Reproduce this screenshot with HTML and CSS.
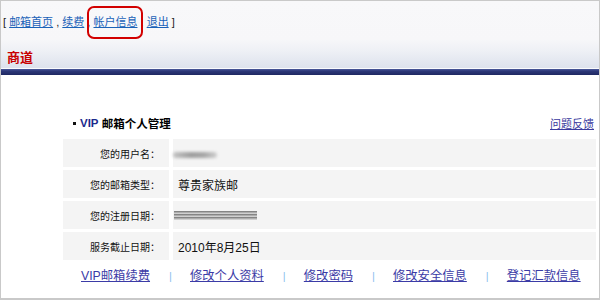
FILE: index.html
```html
<!DOCTYPE html>
<html lang="zh-CN">
<head>
<meta charset="utf-8">
<title>帐户信息</title>
<link rel="stylesheet" href="styles.css">
</head>
<body>
<div class="page">
  <div class="header">
    <div class="topnav">[ <a href="#">邮箱首页</a> , <a href="#">续费</a> , <a href="#">帐户信息</a> , <a href="#">退出</a> ]</div>
    <div class="brand">商道</div>
  </div>
  <div class="bar"></div>
  <div class="highlight"></div>
  <div class="main">
    <div class="titlerow">
      <div class="title"><span class="bullet"></span><span class="vip">VIP</span> 邮箱个人管理</div>
      <a class="feedback" href="#">问题反馈</a>
    </div>
    <div class="grid">
      <div class="label">您的用户名：</div>
      <div class="value"><span class="blur blur-name"></span></div>
      <div class="label">您的邮箱类型：</div>
      <div class="value">尊贵家族邮</div>
      <div class="label">您的注册日期：</div>
      <div class="value"><span class="blur blur-date"></span></div>
      <div class="label">服务截止日期：</div>
      <div class="value">2010年8月25日</div>
    </div>
    <div class="links">
      <a href="#">VIP邮箱续费</a><span class="sep">|</span>
      <a href="#">修改个人资料</a><span class="sep">|</span>
      <a href="#">修改密码</a><span class="sep">|</span>
      <a href="#">修改安全信息</a><span class="sep">|</span>
      <a href="#">登记汇款信息</a>
    </div>
  </div>
</div>
</body>
</html>
```
FILE: styles.css
```css
html, body {
  margin: 0;
  padding: 0;
  background: #fff;
}
body {
  font-family: "Liberation Sans", "Noto Sans CJK SC", sans-serif;
  color: #222;
}
.page {
  position: relative;
  width: 600px;
  height: 300px;
  box-sizing: border-box;
  border: 1px solid #c9c9c9;
  border-bottom-width: 2px;
  overflow: hidden;
}
.header {
  height: 67px;
  background: linear-gradient(#f8f8fa 0, #f7f7f9 38px, #eef0f5 50px, #dde2ed 67px);
  border-bottom: 1px solid #fafbfd;
  display: flex;
  flex-direction: column;
}
.topnav {
  font-size: 11px;
  line-height: 14px;
  padding: 14px 0 0 2px;
  color: #222;
  white-space: pre;
}
.topnav a {
  color: #1a62b8;
  text-decoration: underline;
}
.brand {
  margin-top: 22px;
  padding-left: 6px;
  font-size: 13px;
  line-height: 14px;
  font-weight: bold;
  color: #c80000;
}
.bar {
  height: 6px;
  background: linear-gradient(#4b5a9c 0, #2d3878 35%, #1f2862 100%);
}
.highlight {
  position: absolute;
  left: 86px;
  top: 5px;
  width: 52px;
  height: 29px;
  border: 2px solid #d20000;
  border-radius: 7px;
}
.main {
  padding: 40px 3px 0 62px;
}
.titlerow {
  display: flex;
  justify-content: space-between;
  align-items: center;
  height: 16px;
  margin-bottom: 8px;
}
.title {
  display: flex;
  align-items: center;
  padding-left: 10px;
  font-size: 11.5px;
  font-weight: bold;
  color: #000;
  white-space: pre;
}
.bullet {
  width: 3px;
  height: 3px;
  background: #111;
  margin-right: 4px;
}
.vip {
  color: #1b2a8c;
}
.feedback {
  font-size: 11px;
  color: #3a3a9e;
  text-decoration: underline;
  margin-right: 2px;
}
.grid {
  display: grid;
  grid-template-columns: 106px 1fr;
  grid-auto-rows: 28px;
  column-gap: 4px;
  row-gap: 3px;
}
.label,
.value {
  background: #f4f4f4;
  display: flex;
  align-items: center;
}
.label {
  justify-content: flex-end;
  padding-right: 9px;
  font-size: 10px;
  color: #111;
}
.value {
  padding-left: 5px;
  font-size: 12px;
  color: #111;
}
.blur {
  display: inline-block;
}
.blur-name {
  margin-left: -5px;
  margin-top: 3px;
  width: 44px;
  height: 6px;
  border-radius: 4px;
  background: linear-gradient(90deg, #c4c4c4, #9e9e9e 40%, #a6a6a6 70%, #cfcfcf);
  filter: blur(1.8px);
}
.blur-date {
  margin-left: -4px;
  width: 83px;
  height: 9px;
  background: repeating-linear-gradient(#7f7f7f 0, #8a8a8a 1px, #d0d0d0 2px, #cfcfcf 3px);
  filter: blur(0.7px);
}
.links {
  display: flex;
  align-items: center;
  gap: 18px;
  padding-left: 18px;
  margin-top: 8px;
  font-size: 12.3px;
  line-height: 16px;
}
.links a {
  color: #3b3ba6;
  text-decoration: underline;
}
.sep {
  color: #8ec0ee;
  font-size: 11px;
  width: 3px;
  padding-left: 1px;
}
```
